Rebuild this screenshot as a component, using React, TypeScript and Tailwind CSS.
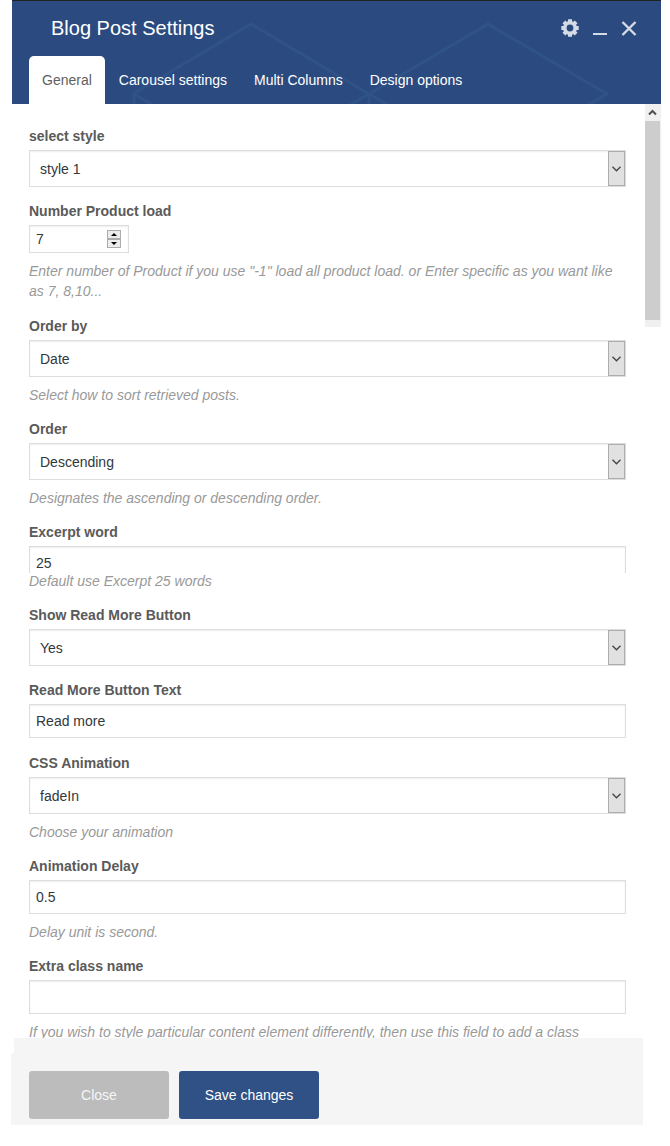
import { useState } from 'react';
import { clsx } from 'clsx';

type Field = {
  id: string;
  label: string;
  kind: 'select' | 'text' | 'number';
  value: string;
  options?: string[];
  help?: string;
  cropped?: boolean;
  spaced?: boolean;
};

const tabs = ['General', 'Carousel settings', 'Multi Columns', 'Design options'];

const fields: Field[] = [
  { id: 'style', label: 'select style', kind: 'select', value: 'style 1', options: ['style 1', 'style 2'] },
  {
    id: 'number',
    label: 'Number Product load',
    kind: 'number',
    value: '7',
    help: 'Enter number of Product if you use "-1" load all product load. or Enter specific as you want like as 7, 8,10...',
    spaced: true,
  },
  {
    id: 'orderby',
    label: 'Order by',
    kind: 'select',
    value: 'Date',
    options: ['Date', 'Title'],
    help: 'Select how to sort retrieved posts.',
  },
  {
    id: 'order',
    label: 'Order',
    kind: 'select',
    value: 'Descending',
    options: ['Descending', 'Ascending'],
    help: 'Designates the ascending or descending order.',
  },
  {
    id: 'excerpt',
    label: 'Excerpt word',
    kind: 'text',
    value: '25',
    help: 'Default use Excerpt 25 words',
    cropped: true,
  },
  { id: 'show-more', label: 'Show Read More Button', kind: 'select', value: 'Yes', options: ['Yes', 'No'] },
  { id: 'more-text', label: 'Read More Button Text', kind: 'text', value: 'Read more', spaced: true },
  {
    id: 'animation',
    label: 'CSS Animation',
    kind: 'select',
    value: 'fadeIn',
    options: ['fadeIn', 'none'],
    help: 'Choose your animation',
  },
  { id: 'delay', label: 'Animation Delay', kind: 'text', value: '0.5', help: 'Delay unit is second.' },
  {
    id: 'class',
    label: 'Extra class name',
    kind: 'text',
    value: '',
    help: 'If you wish to style particular content element differently, then use this field to add a class',
  },
];

const inputClass =
  'block border border-[#ddd] bg-white text-sm text-[#32373c] shadow-[inset_0_1px_2px_rgba(0,0,0,0.07)] outline-none';

function HeaderPattern() {
  return (
    <svg
      className="pointer-events-none absolute top-0 left-0"
      width="649"
      height="104"
      fill="none"
      stroke="#2f5287"
      strokeWidth="3"
      aria-hidden="true"
    >
      <path d="M121 93 239 23 357 93 476 23 595 93 576 104" />
      <path d="M122 104V93L141 104M338 104 357 93 376 104M357 93V104" />
    </svg>
  );
}

function SelectField({ field }: { field: Field }) {
  return (
    <div className="relative">
      <select
        id={field.id}
        defaultValue={field.value}
        className={clsx(inputClass, 'h-[37px] w-full appearance-none pr-6 pl-[10px]')}
      >
        {field.options?.map((option) => (
          <option key={option}>{option}</option>
        ))}
      </select>
      <span className="pointer-events-none absolute inset-y-px right-px flex w-[17px] items-center justify-center border border-[#adadad] bg-[#e1e1e1]">
        <svg width="9" height="6" fill="none" stroke="#444" strokeWidth="1.3" aria-hidden="true">
          <path d="M.5.8 4.5 4.8 8.5.8" />
        </svg>
      </span>
    </div>
  );
}

function NumberField({ field }: { field: Field }) {
  const [value, setValue] = useState(field.value);
  const step = (by: number) => setValue(String(Number(value) + by));
  const stepClass =
    'flex h-[9px] w-[14px] items-center justify-center border border-[#acacac] bg-[#ececec]';

  return (
    <div className="relative w-[100px]">
      <input
        id={field.id}
        type="number"
        value={value}
        onChange={(e) => setValue(e.target.value)}
        className={clsx(inputClass, 'h-7 w-full appearance-none px-[6px] [-moz-appearance:textfield] [&::-webkit-inner-spin-button]:appearance-none')}
      />
      <div className="absolute inset-y-0 right-2 flex flex-col justify-center">
        <button type="button" aria-label="Increase" className={stepClass} onClick={() => step(1)}>
          <svg width="6" height="3" aria-hidden="true">
            <path d="M0 3 3 0 6 3Z" />
          </svg>
        </button>
        <button type="button" aria-label="Decrease" className={stepClass} onClick={() => step(-1)}>
          <svg width="6" height="3" aria-hidden="true">
            <path d="M0 0H6L3 3Z" />
          </svg>
        </button>
      </div>
    </div>
  );
}

function TextField({ field }: { field: Field }) {
  return (
    <div className={clsx(field.cropped && '-mb-[10px] h-[27px] overflow-hidden')}>
      <input
        id={field.id}
        type="text"
        defaultValue={field.value}
        className={clsx(inputClass, 'h-[34px] w-full px-[6px]')}
      />
    </div>
  );
}

export default function App() {
  const [active, setActive] = useState('General');

  return (
    <div className="h-screen bg-white pr-[9px] pb-[21px] pl-[11px] font-['Liberation_Sans',Arial,sans-serif] text-sm leading-5">
      <div className="flex h-full flex-col">
        <header className="relative ml-px shrink-0 overflow-hidden border-t border-[#222] bg-[#2b4b80] text-white">
          <HeaderPattern />
          <div className="relative flex h-[55px] items-center justify-between pr-6 pb-[2px] pl-[39px]">
            <h1 className="text-xl">Blog Post Settings</h1>
            <div className="flex items-center gap-3 text-[#d5dbe6]">
              <button type="button" aria-label="Settings">
                <svg width="18" height="18" viewBox="0 0 18 18" aria-hidden="true">
                  <g stroke="currentColor" strokeWidth="4">
                    <path d="M9 .3V4M9 14v3.7M.3 9H4M14 9h3.7M2.9 2.9l2.6 2.6M12.5 12.5l2.6 2.6M2.9 15.1l2.6-2.6M12.5 5.5l2.6-2.6" />
                  </g>
                  <circle cx="9" cy="9" r="5.2" fill="none" stroke="currentColor" strokeWidth="3.6" />
                </svg>
              </button>
              <button type="button" aria-label="Minimize" className="px-px">
                <svg width="16" height="18" aria-hidden="true">
                  <path d="M1 14h14v2H1z" fill="currentColor" />
                </svg>
              </button>
              <button type="button" aria-label="Close panel">
                <svg width="16" height="18" stroke="currentColor" strokeWidth="2.4" aria-hidden="true">
                  <path d="M1.5 3l13 13M14.5 3l-13 13" />
                </svg>
              </button>
            </div>
          </div>
          <nav className="relative flex gap-px pl-[17px]">
            {tabs.map((tab) => (
              <button
                key={tab}
                type="button"
                onClick={() => setActive(tab)}
                className={clsx(
                  'h-12 rounded-t-[5px] px-[13px] whitespace-nowrap',
                  tab === active ? 'bg-white text-[#5f5f5f]' : 'text-white'
                )}
              >
                {tab}
              </button>
            ))}
          </nav>
        </header>

        <div className="flex min-h-0 flex-1">
          <form className="min-w-0 flex-1 overflow-hidden pt-[22px] pr-[19px] pl-[18px]">
            {fields.map((field) => (
              <div key={field.id} className={field.spaced ? 'mb-[15px]' : 'mb-[14px]'}>
                <label htmlFor={field.id} className="mb-1 block text-sm leading-5 font-bold text-[#5a5a5a]">
                  {field.label}
                </label>
                {field.kind === 'select' && <SelectField field={field} />}
                {field.kind === 'number' && <NumberField field={field} />}
                {field.kind === 'text' && <TextField field={field} />}
                {field.help && <p className="mt-2 text-[#999] italic">{field.help}</p>}
              </div>
            ))}
          </form>

          {/* Scrollbar */}
          <div className="h-[223px] w-4 shrink-0 bg-[#f0f0f0] pr-px">
            <div className="flex h-[17px] items-center justify-center">
              <svg width="9" height="7" fill="none" stroke="#505050" strokeWidth="2" aria-hidden="true">
                <path d="M1 5.5 4.5 2 8 5.5" />
              </svg>
            </div>
            <div className="h-[199px] bg-[#cdcdcd]" />
          </div>
        </div>

        <footer className="mr-[18px] shrink-0">
          <div className="ml-[3px] h-[15px] bg-[#f5f5f5]" />
          <div className="flex gap-[10px] bg-[#f5f5f5] px-[18px] pt-[18px] pb-[6px]">
            <button type="button" className="h-12 w-[140px] rounded-[3px] bg-[#bcbcbc] text-[#f5f5f5]">
              Close
            </button>
            <button type="button" className="h-12 w-[140px] rounded-[3px] bg-[#2f5185] text-white">
              Save changes
            </button>
          </div>
        </footer>
      </div>
    </div>
  );
}
